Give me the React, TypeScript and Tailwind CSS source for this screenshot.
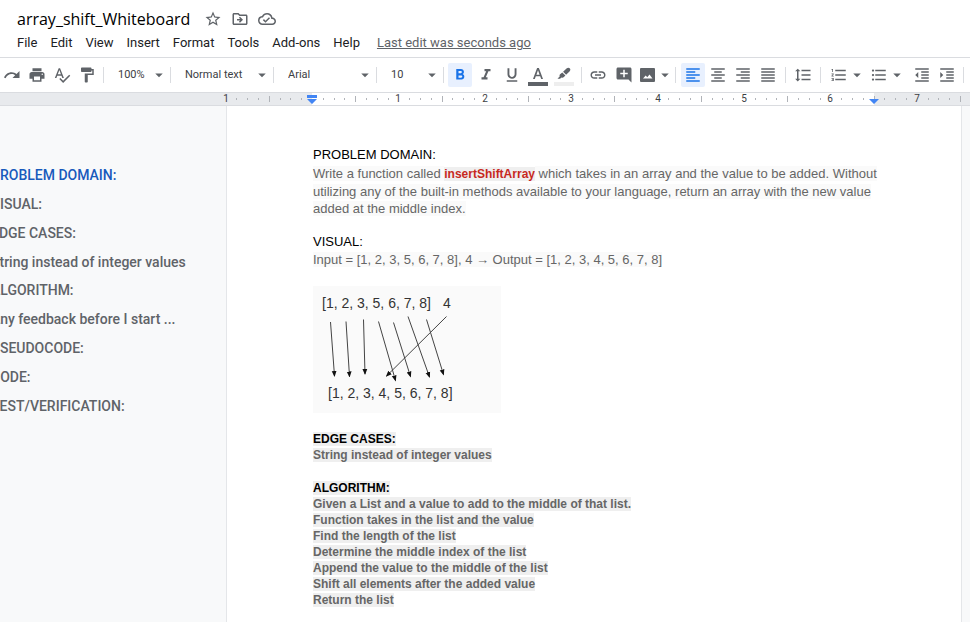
import type { ComponentType, ReactNode } from "react";
import {
  MdAddComment,
  MdArrowDropDown,
  MdFormatAlignCenter,
  MdFormatAlignJustify,
  MdFormatAlignLeft,
  MdFormatAlignRight,
  MdFormatBold,
  MdFormatIndentDecrease,
  MdFormatIndentIncrease,
  MdFormatItalic,
  MdFormatLineSpacing,
  MdFormatListBulleted,
  MdFormatListNumbered,
  MdFormatPaint,
  MdFormatUnderlined,
  MdInsertLink,
  MdOutlineCloudDone,
  MdOutlineDriveFileMove,
  MdPrint,
  MdSpellcheck,
  MdStarBorder,
} from "react-icons/md";

type IconType = ComponentType<{ className?: string }>;

const menus = ["File", "Edit", "View", "Insert", "Format", "Tools", "Add-ons", "Help"];

const outline = [
  "PROBLEM DOMAIN:",
  "VISUAL:",
  "EDGE CASES:",
  "String instead of integer values",
  "ALGORITHM:",
  "Any feedback before I start ...",
  "PSEUDOCODE:",
  "CODE:",
  "TEST/VERIFICATION:",
];

const algorithm = [
  "Given a List and a value to add to the middle of that list.",
  "Function takes in the list and the value",
  "Find the length of the list",
  "Determine the middle index of the list",
  "Append the value to the middle of the list",
  "Shift all elements after the added value",
  "Return the list",
];

function RedoIcon({ className }: { className?: string }) {
  return (
    <svg viewBox="0 0 18 18" className={className} fill="currentColor">
      <path d="M16.500 5v7h-7l2.700-2.700C11.200 8.400 10 8 8.600 8 6 8 3.600 9.700 2.600 12.200L1 11.600C2.200 8.400 5.200 6.200 8.600 6.200c2 0 3.500.7 4.900 1.800z" />
    </svg>
  );
}

function TextColorIcon({ className }: { className?: string }) {
  return (
    <svg viewBox="0 0 20 24" className={className} fill="currentColor">
      <path d="M9.100 5h1.800L15 16h-1.800l-1-2.800H7.800l-1 2.800H5zm-.7 6.700h3.200L10 7.200z" />
      <path d="M0 19h20v4H0z" />
    </svg>
  );
}

function HighlightIcon({ className }: { className?: string }) {
  return (
    <svg viewBox="0 0 20 24" className={className} fill="currentColor">
      <path d="M12.500 5.600c1.200-1.100 2.300-1.200 3.200-.3s.9 2.100-.2 3.200l-3.400 3.200-3-2.900zM8.300 9.500l3.100 3-1.500 1.600c-.9.9-1.700.9-2.600.5l-1.200 1.200H3.500l2.300-2.500c-.5-.9-.2-1.600.6-2.300z" />
      <path d="M0 19h20v4H0z" fill="#eeeeee" />
    </svg>
  );
}

function PictureIcon({ className }: { className?: string }) {
  return (
    <svg viewBox="0 0 18 18" className={className} fill="currentColor" fillRule="evenodd">
      <path d="M3 2h13a1 1 0 0 1 1 1v12a1 1 0 0 1-1 1H3a1 1 0 0 1-1-1V3a1 1 0 0 1 1-1zm2 10.500h9.500L11.500 8.500 9.300 11.300 7.700 9.400z" />
    </svg>
  );
}

function ToolButton({ label, icon: Icon, active, size = "size-[18px]" }: { label: string; icon: IconType; active?: boolean; size?: string }) {
  return (
    <button
      type="button"
      aria-label={label}
      aria-pressed={active}
      className={`flex h-6 w-6 shrink-0 items-center justify-center rounded-xs ${active ? "bg-[#e8f0fe] text-[#1a73e8]" : "text-[#5f6368]"}`}
    >
      <Icon className={size} />
    </button>
  );
}

function MenuButton({ label, icon: Icon }: { label: string; icon: IconType }) {
  return (
    <button type="button" aria-label={label} className="flex h-6 w-[39px] shrink-0 items-center text-[#5f6368]">
      <Icon className="size-[18px] shrink-0" />
      <MdArrowDropDown className="size-[18px] shrink-0" />
    </button>
  );
}

function Group({ className, children }: { className: string; children: ReactNode }) {
  return (
    <div className="flex h-6 shrink-0 items-center">
      <div className={`flex items-center ${className}`}>{children}</div>
      <div className="h-4 w-px bg-[#dadce0]" />
    </div>
  );
}

function ToolSelect({ label, value }: { label: string; value: string }) {
  return (
    <label className="relative flex h-6 w-full items-center">
      <select aria-label={label} className="h-6 w-full appearance-none bg-transparent pl-3.5 text-[11px] text-[#3c4043]">
        <option>{value}</option>
      </select>
      <MdArrowDropDown className="pointer-events-none absolute right-0.5 size-[18px] text-[#5f6368]" />
    </label>
  );
}

function Ruler() {
  const inch = 86.4;
  const origin = 312;
  const ticks = Array.from({ length: 69 }, (_, i) => i - 8);
  return (
    <div className="h-3.5 shrink-0 overflow-hidden border-y border-[#dadce0] bg-[#e8eaed]">
      <svg className="block h-3 w-full" aria-label="Ruler">
        <rect x={origin} y="0" width="562" height="12" fill="#ffffff" />
        {ticks.map((t) => {
          const x = Math.round(origin + (t * inch) / 8);
          if (t === 0) return null;
          if (t % 8 === 0)
            return (
              <text key={t} x={x} y="9" textAnchor="middle" className="fill-[#3c4043] text-[10px]">
                {Math.abs(t / 8)}
              </text>
            );
          const tall = t % 4 === 0;
          return <rect key={t} x={x} y={tall ? 3 : 5} width="1" height={tall ? 6 : 2} fill="#b0b3b8" />;
        })}
        <path d="M307 2h10v3h-10zM307 6h10l-5 5zM869 6h10l-5 5z" fill="#4285f4" />
      </svg>
    </div>
  );
}

const arrows: [number, number, number, number][] = [
  [17.5, 36, 21.5, 90],
  [33, 35.5, 36.5, 90.5],
  [50.5, 33.5, 52, 88],
  [65.5, 35.5, 82.5, 94.5],
  [80.5, 36.5, 97.5, 90.5],
  [95, 30.5, 116.5, 91],
  [113.5, 33.5, 130.5, 88.5],
  [133.5, 30.5, 73.5, 90],
];

function ShiftDiagram() {
  return (
    <svg viewBox="0 0 188 127" className="mt-[18px] block h-[127px] w-[188px] bg-[#fafafa]">
      <defs>
        <marker id="tip" viewBox="0 0 6 6" refX="5" refY="3" markerWidth="6" markerHeight="6" orient="auto">
          <path d="M0 .6 6 3 0 5.400z" fill="#111" />
        </marker>
      </defs>
      <g className="fill-[#333] text-[14px]">
        <text x="9" y="22">[1, 2, 3, 5, 6, 7, 8]</text>
        <text x="130" y="22">4</text>
        <text x="15" y="112">[1, 2, 3, 4, 5, 6, 7, 8]</text>
      </g>
      {arrows.map(([x1, y1, x2, y2]) => (
        <line key={x1} x1={x1} y1={y1} x2={x2} y2={y2} stroke="#444" strokeWidth="1" markerEnd="url(#tip)" />
      ))}
    </svg>
  );
}

function Marked({ children }: { children: ReactNode }) {
  return <span className="bg-[#efefef]">{children}</span>;
}

function Tinted({ children }: { children: ReactNode }) {
  return <span className="bg-[#fafafa]">{children}</span>;
}

export default function App() {
  return (
    <div className="flex h-screen flex-col overflow-hidden bg-white font-[Roboto,sans-serif]">
      <header className="shrink-0 border-b border-[#dadce0] pt-2 pl-[17px]">
        <div className="flex h-[22px] items-center text-[#5f6368]">
          <h1 className="font-['Open_Sans',sans-serif] text-base text-black">array_shift_Whiteboard</h1>
          <div className="ml-3.5 flex gap-[9px]">
            <button type="button" aria-label="Star"><MdStarBorder className="size-[18px]" /></button>
            <button type="button" aria-label="Move"><MdOutlineDriveFileMove className="size-[18px]" /></button>
            <button type="button" aria-label="See document status"><MdOutlineCloudDone className="size-[18px]" /></button>
          </div>
        </div>
        <nav className="flex h-[27px] items-center gap-[13px] pb-px text-[13px] whitespace-nowrap text-[#202124]">
          {menus.map((m) => (
            <button type="button" key={m}>{m}</button>
          ))}
          <a href="#history" className="ml-1 text-[#5f6368] underline">Last edit was seconds ago</a>
        </nav>
      </header>

      <div className="flex h-[34px] shrink-0 items-center overflow-hidden" role="toolbar">
        <Group className="w-[103px] gap-px">
          <ToolButton label="Redo" icon={RedoIcon} />
          <ToolButton label="Print" icon={MdPrint} />
          <ToolButton label="Spelling and grammar check" icon={MdSpellcheck} />
          <ToolButton label="Paint format" icon={MdFormatPaint} />
        </Group>
        <Group className="w-[66px]"><ToolSelect label="Zoom" value="100%" /></Group>
        <Group className="w-[102px]"><ToolSelect label="Styles" value="Normal text" /></Group>
        <Group className="w-[102px]"><ToolSelect label="Font" value="Arial" /></Group>
        <Group className="w-[66px]"><ToolSelect label="Font size" value="10" /></Group>
        <Group className="w-[137px] gap-0.5 pl-1">
          <ToolButton label="Bold" icon={MdFormatBold} active />
          <ToolButton label="Italic" icon={MdFormatItalic} />
          <ToolButton label="Underline" icon={MdFormatUnderlined} />
          <ToolButton label="Text color" icon={TextColorIcon} size="h-6 w-5" />
          <ToolButton label="Highlight color" icon={HighlightIcon} size="h-6 w-5" />
        </Group>
        <Group className="w-[93px] gap-0.5 pl-1">
          <ToolButton label="Insert link" icon={MdInsertLink} />
          <ToolButton label="Add comment" icon={MdAddComment} />
          <MenuButton label="Insert image" icon={PictureIcon} />
        </Group>
        <Group className="w-[109px] gap-px pl-[5px]">
          <ToolButton label="Left align" icon={MdFormatAlignLeft} active />
          <ToolButton label="Center align" icon={MdFormatAlignCenter} />
          <ToolButton label="Right align" icon={MdFormatAlignRight} />
          <ToolButton label="Justify" icon={MdFormatAlignJustify} />
        </Group>
        <Group className="w-[34px] pl-[5px]"><ToolButton label="Line spacing" icon={MdFormatLineSpacing} /></Group>
        <Group className="w-[142px] gap-px pl-[9px]">
          <MenuButton label="Numbered list" icon={MdFormatListNumbered} />
          <MenuButton label="Bulleted list" icon={MdFormatListBulleted} />
          <ToolButton label="Decrease indent" icon={MdFormatIndentDecrease} />
          <ToolButton label="Increase indent" icon={MdFormatIndentIncrease} />
        </Group>
      </div>

      <Ruler />

      <div className="flex min-h-0 flex-1 bg-[#f8f9fa]">
        <aside className="w-[226px] shrink-0 overflow-hidden pt-[55px]">
          <nav className="-ml-[9px] grid h-[259px] auto-rows-fr text-sm font-medium whitespace-nowrap text-[#5f6368]">
            {outline.map((o, i) => (
              <a key={o} href="#doc" className={`flex items-center ${i === 0 ? "text-[#185abc]" : ""}`}>{o}</a>
            ))}
          </nav>
        </aside>
        <main
          id="doc"
          className="mr-2 min-w-0 flex-1 overflow-hidden border-x border-[#e4e6e9] bg-white pt-10 pr-[72px] pl-[86px] font-['Liberation_Sans',Arial,sans-serif] text-xs text-[#666666]"
        >
          <h2 className="mb-px text-[13px] leading-[18px] text-black">PROBLEM DOMAIN:</h2>
          <p className="text-[13px] leading-[17px]">
            <Tinted>Write a function called </Tinted>
            <strong className="bg-[#efefef] text-xs leading-[17px] text-[#c7291e]">insertShiftArray</strong>
            <Tinted> which takes in an array and the value to be added. Without</Tinted>
            <br />
            <Tinted>utilizing any of the built-in methods available to your language, return an array with the new value</Tinted>
            <br />
            <Tinted>added at the middle index.</Tinted>
          </p>
          <h2 className="mt-4 text-[13px] leading-[18px] text-black">VISUAL:</h2>
          <p className="text-[13px] leading-[17px]">
            <Tinted>Input = [1, 2, 3, 5, 6, 7, 8], 4 → Output = [1, 2, 3, 4, 5, 6, 7, 8]</Tinted>
          </p>
          <ShiftDiagram />
          <h2 className="mt-[18px] leading-4 font-bold text-black"><Marked>EDGE CASES:</Marked></h2>
          <p className="leading-4 font-bold"><Marked>String instead of integer values</Marked></p>
          <h2 className="mt-[17px] leading-4 font-bold text-black"><Marked>ALGORITHM:</Marked></h2>
          {algorithm.map((line) => (
            <p key={line} className="leading-4 font-bold"><Marked>{line}</Marked></p>
          ))}
        </main>
      </div>
    </div>
  );
}
